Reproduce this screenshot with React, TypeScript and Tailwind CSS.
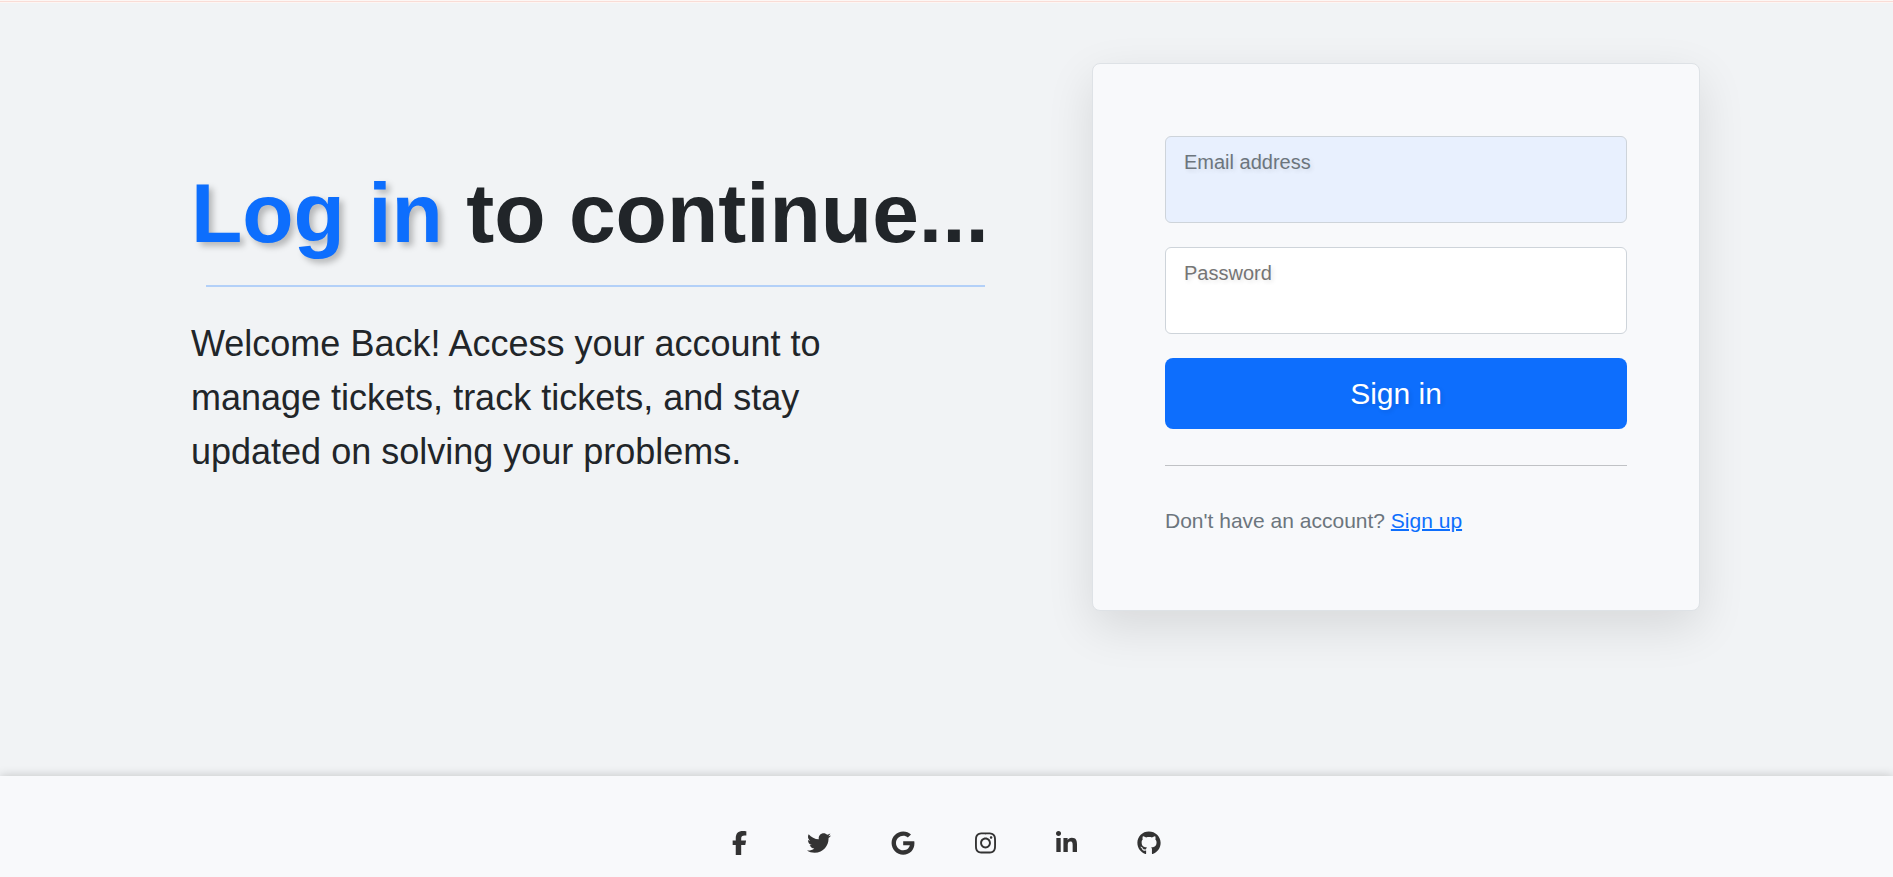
import { FaFacebookF, FaGithub, FaGoogle, FaInstagram, FaLinkedinIn, FaTwitter } from "react-icons/fa6";

const socials = [
  { label: "Facebook", Icon: FaFacebookF, width: "w-[15px]" },
  { label: "Twitter", Icon: FaTwitter, width: "w-6" },
  { label: "Google", Icon: FaGoogle, width: "w-6" },
  { label: "Instagram", Icon: FaInstagram, width: "w-[21px]" },
  { label: "LinkedIn", Icon: FaLinkedinIn, width: "w-[21px]" },
  { label: "GitHub", Icon: FaGithub, width: "w-6" },
];

const fieldClass =
  "block w-full rounded-md border border-[#ced4da] px-[18px] pt-[13px] pb-12 text-xl leading-6 text-shadow-[2px_2px_4px_rgba(0,0,0,0.1)] outline-none focus:border-[#86b7fe]";

function Intro() {
  return (
    <section className="min-w-0 flex-1">
      <h1 className="whitespace-nowrap text-[84px] leading-[100px] font-bold">
        <span className="text-[#0d6efd] text-shadow-[4px_4px_6px_rgba(0,0,0,0.25)]">Log in</span> to continue...
      </h1>
      <hr className="mx-[15px] mt-[22px] border-0 border-t-2 border-[#b3d0f8]" />
      <p className="mt-[30px] max-w-[700px] text-4xl leading-[54px]">
        Welcome Back! Access your account to manage tickets, track tickets, and stay updated on solving your problems.
      </p>
    </section>
  );
}

function LoginForm() {
  return (
    <form
      className="w-[608px] rounded-lg border border-[#dee2e6] bg-[#f8f9fb] p-[72px] shadow-[0_16px_48px_rgba(0,0,0,0.11)]"
      onSubmit={(event) => event.preventDefault()}
    >
      <div className="flex flex-col gap-6">
        <input
          type="email"
          aria-label="Email address"
          placeholder="Email address"
          className={`${fieldClass} bg-[#e8f0fe] placeholder:text-[#6c757d]`}
        />
        <input
          type="password"
          aria-label="Password"
          placeholder="Password"
          className={`${fieldClass} bg-white placeholder:text-[#757575]`}
        />
        <button
          type="submit"
          className="h-[71px] w-full rounded-lg bg-[#0d6efd] text-3xl text-white text-shadow-[2px_2px_4px_rgba(0,0,0,0.1)]"
        >
          Sign in
        </button>
      </div>
      <hr className="my-9 border-0 border-t border-[#c0c2c5]" />
      <p className="pt-[3px] pb-px text-[21px] leading-8 text-[#6c757d]">
        Don't have an account?{" "}
        <a href="#signup" className="text-[#0d6efd] underline decoration-2">
          Sign up
        </a>
      </p>
    </form>
  );
}

export default function App() {
  return (
    <div className="flex min-h-screen flex-col bg-[#f1f3f5] font-['Liberation_Sans',Arial,sans-serif] text-[#212529]">
      <div className="h-[3px] border-y border-[#fdf6f4] bg-[#f9dcd6]" />
      <main className="flex items-start gap-[92px] pt-[60px] pr-[193px] pb-[165px] pl-[191px]">
        <div className="flex min-w-0 flex-1 pt-[100px]">
          <Intro />
        </div>
        <LoginForm />
      </main>
      <footer className="flex-1 bg-[#f8f9fb] pt-[55px] shadow-[0_0_10px_rgba(0,0,0,0.2)]">
        <nav aria-label="Social links" className="flex justify-center gap-[60px] text-2xl text-[#333333]">
          {socials.map(({ label, Icon, width }) => (
            <a key={label} href={`#${label.toLowerCase()}`} aria-label={label}>
              <Icon className={`h-6 ${width}`} />
            </a>
          ))}
        </nav>
      </footer>
    </div>
  );
}
